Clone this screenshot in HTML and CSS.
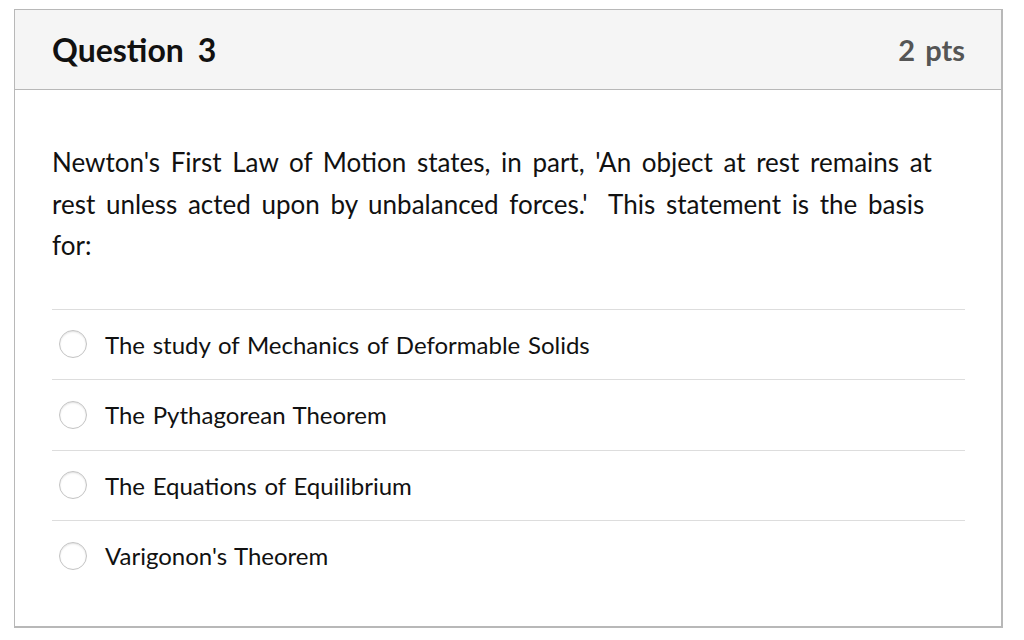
FILE: index.html
```html
<!DOCTYPE html>
<html lang="en">
<head>
  <meta charset="utf-8">
  <title>Question 3</title>
  <link rel="stylesheet" href="styles.css">
</head>
<body>

<div id="question">
  <div id="header">
    <div id="title">Question 3</div>
    <div id="points">2 pts</div>
  </div>
  <div id="content">
    <div id="text">Newton's First Law of Motion states, in part, 'An object at rest remains at rest unless acted upon by unbalanced forces.'&nbsp; This statement is the basis for:</div>
    <div id="answers">
      <label class="answer"><span class="radio"></span>The study of Mechanics of Deformable Solids</label>
      <label class="answer"><span class="radio"></span>The Pythagorean Theorem</label>
      <label class="answer"><span class="radio"></span>The Equations of Equilibrium</label>
      <label class="answer"><span class="radio"></span>Varigonon's Theorem</label>
    </div>
  </div>
</div>

</body>
</html>
```

FILE: styles.css
```css
html, body {
  margin: 0;
  background: #ffffff;
  font-family: Lato, "Liberation Sans", sans-serif;
  color: #111111;
}

body {
  padding: 9px 21px 0 14px;
}

#question {
  border: 2px solid #b8b8b8;
  border-width: 1px 2px 2px 1px;
  height: 619px;
  box-sizing: border-box;
}

#header {
  display: flex;
  justify-content: space-between;
  align-items: center;
  height: 80px;
  padding: 0 36px 0 37px;
  background-color: #f5f5f5;
  border-bottom: 1px solid #b8b8b8;
  box-sizing: border-box;
}

#title {
  font-size: 32px;
  font-weight: bold;
  color: #111111;
  word-spacing: 6px;
}

#points {
  font-size: 29px;
  font-weight: bold;
  color: #555555;
  word-spacing: 3px;
}

#content {
  padding: 52px 36px 0 37px;
}

#text {
  font-size: 26px;
  line-height: 41.5px;
  word-spacing: 4px;
  padding-right: 10px;
}

#answers {
  margin-top: 42px;
  border-top: 1px solid #dddddd;
}

.answer {
  display: flex;
  align-items: center;
  height: 69.5px;
  border-bottom: 1px solid #dddddd;
  font-size: 24px;
  word-spacing: 1.5px;
  padding-left: 7px;
}

.answer:last-child {
  border-bottom: none;
}

.radio {
  width: 26px;
  height: 26px;
  border-radius: 50%;
  border: 1px solid #c4c4c4;
  box-shadow: inset 0 1px 2px rgba(0, 0, 0, 0.12);
  margin-right: 18px;
  flex-shrink: 0;
  background: #ffffff;
}
```
